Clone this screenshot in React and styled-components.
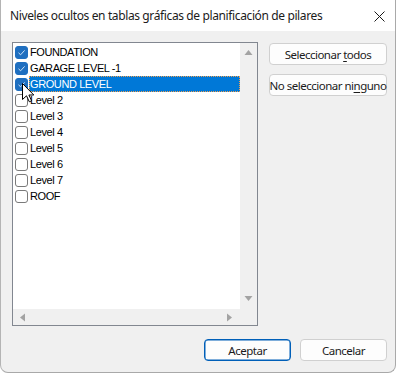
import React from 'react';
import styled, { createGlobalStyle } from 'styled-components';

const GlobalStyle = createGlobalStyle`
	html, body {
		margin: 0;
		padding: 0;
		background: #ffffff;
	}
	* {
		box-sizing: border-box;
	}
`;

const levels = [
	{ name: 'FOUNDATION', checked: true },
	{ name: 'GARAGE LEVEL -1', checked: true },
	{ name: 'GROUND LEVEL', checked: true, selected: true },
	{ name: 'Level 2', checked: false },
	{ name: 'Level 3', checked: false },
	{ name: 'Level 4', checked: false },
	{ name: 'Level 5', checked: false },
	{ name: 'Level 6', checked: false },
	{ name: 'Level 7', checked: false },
	{ name: 'ROOF', checked: false },
];

const Arrow = ({ dir }) => {
	const shapes = {
		up: '0,6 4,1 8,6',
		down: '0,1 4,6 8,1',
		left: '6,0 1,4 6,8',
		right: '1,0 6,4 1,8',
	};
	const vertical = dir === 'up' || dir === 'down';
	return (
		<svg width={vertical ? 9 : 7} height={vertical ? 7 : 9} viewBox={vertical ? '0 0 8 7' : '0 0 7 8'}>
			<polygon points={shapes[dir]} fill='#a3a3a3' />
		</svg>
	);
};

const Checkbox = ({ checked }) => (
	<StyledCheck $checked={checked}>
		{checked && (
			<svg width='9' height='9' viewBox='0 0 9 9'>
				<polyline points='1.5,4.8 3.6,6.8 7.6,2.4' fill='none' stroke='#cfe4f7' strokeWidth='1' />
			</svg>
		)}
	</StyledCheck>
);

const Cursor = () => (
	<StyledCursor width='13' height='20' viewBox='0 0 13 20'>
		<polygon
			points='0.5,0.5 0.5,16.5 4.5,12.8 7.3,18.8 9.6,17.8 6.9,12 11.8,12'
			fill='#ffffff'
			stroke='#000000'
			strokeWidth='1'
			strokeLinejoin='miter'
		/>
	</StyledCursor>
);

const App = () => {
	return (
		<>
			<GlobalStyle />
			<Window>
				<TitleBar>
					<Title>Niveles ocultos en tablas gráficas de planificación de pilares</Title>
					<CloseButton>
						<svg width='11' height='11' viewBox='0 0 11 11'>
							<path d='M0.5 0.5 L10.5 10.5 M10.5 0.5 L0.5 10.5' stroke='#1a1a1a' strokeWidth='1' />
						</svg>
					</CloseButton>
				</TitleBar>
				<Body>
					<Content>
						<ListBox>
							<ListMain>
								<Items>
									{levels.map((level) => (
										<Item key={level.name}>
											<Checkbox checked={level.checked} />
											<Label $selected={level.selected}>{level.name}</Label>
										</Item>
									))}
									<Cursor />
								</Items>
								<VScroll>
									<Arrow dir='up' />
									<Arrow dir='down' />
								</VScroll>
							</ListMain>
							<HScrollRow>
								<HScroll>
									<Arrow dir='left' />
									<Arrow dir='right' />
								</HScroll>
								<Corner />
							</HScrollRow>
						</ListBox>
						<SideButtons>
							<Button $width={118}>
								<span>
									Seleccionar <u>t</u>odos
								</span>
							</Button>
							<Button $width={118}>
								<span>
									No seleccionar ni<u>n</u>guno
								</span>
							</Button>
						</SideButtons>
					</Content>
					<Footer>
						<Button $width={87} $primary>
							<span>Aceptar</span>
						</Button>
						<Button $width={87}>
							<span>Cancelar</span>
						</Button>
					</Footer>
				</Body>
			</Window>
		</>
	);
};

const Window = styled.div`
	width: 396px;
	height: 373px;
	border: 1px solid #a9a9a9;
	border-top: none;
	border-left-color: #b4b4b4;
	border-radius: 0 0 8px 8px;
	background: #f0f0f0;
	display: flex;
	flex-direction: column;
	overflow: hidden;
	font-family: 'Segoe UI', 'Noto Sans', sans-serif;
`;

const TitleBar = styled.div`
	height: 31px;
	flex: 0 0 31px;
	background: #ffffff;
	display: flex;
	align-items: center;
	justify-content: space-between;
	padding-left: 9px;
`;

const Title = styled.span`
	font-size: 12px;
	color: #1b1b1b;
	letter-spacing: -0.38px;
	padding-bottom: 1px;
`;

const CloseButton = styled.div`
	width: 46px;
	height: 31px;
	display: flex;
	align-items: center;
	justify-content: center;
	margin-right: -7px;
	padding-top: 1px;
`;

const Body = styled.div`
	flex: 1;
	display: flex;
	flex-direction: column;
	padding: 11px 8px 0 11px;
`;

const Content = styled.div`
	display: flex;
	gap: 11px;
	align-items: flex-start;
`;

const ListBox = styled.div`
	width: 247px;
	height: 284px;
	border: 1px solid #828790;
	background: #ffffff;
	display: flex;
	flex-direction: column;
`;

const ListMain = styled.div`
	flex: 1;
	display: flex;
	min-height: 0;
`;

const Items = styled.div`
	position: relative;
	flex: 1;
	padding: 1px 0 0 2px;
	font-family: 'Liberation Sans', Arial, sans-serif;
	font-size: 11px;
	color: #000000;
`;

const Item = styled.div`
	height: 16px;
	display: flex;
	align-items: center;
`;

const StyledCheck = styled.span`
	width: 13px;
	height: 13px;
	flex: 0 0 13px;
	border-radius: 3px;
	border: 1px solid ${({ $checked }) => ($checked ? '#1f6fc0' : '#7a7a7a')};
	background: ${({ $checked }) => ($checked ? '#1f6fc0' : '#ffffff')};
	display: flex;
	align-items: center;
	justify-content: center;
	margin-top: 1px;
`;

const Label = styled.span`
	margin-left: 1px;
	height: 16px;
	line-height: 16px;
	padding-left: 1px;
	flex: ${({ $selected }) => ($selected ? '1' : '0 0 auto')};
	background: ${({ $selected }) => ($selected ? '#0078d7' : 'transparent')};
	color: ${({ $selected }) => ($selected ? '#ffffff' : '#000000')};
	outline: ${({ $selected }) => ($selected ? '1px dotted #f0a050' : 'none')};
	outline-offset: -1px;
	letter-spacing: -0.4px;
`;

const StyledCursor = styled.svg`
	position: absolute;
	left: 9px;
	top: 40px;
`;

const VScroll = styled.div`
	width: 17px;
	flex: 0 0 17px;
	background: #f0f0f0;
	display: flex;
	flex-direction: column;
	justify-content: space-between;
	align-items: center;
	padding: 6px 0 7px;
`;

const HScrollRow = styled.div`
	height: 16px;
	flex: 0 0 16px;
	display: flex;
`;

const HScroll = styled.div`
	flex: 1;
	background: #f0f0f0;
	display: flex;
	justify-content: space-between;
	align-items: center;
	padding: 0 7px 0 6px;
`;

const Corner = styled.div`
	width: 17px;
	background: #f0f0f0;
`;

const SideButtons = styled.div`
	display: flex;
	flex-direction: column;
	gap: 9px;
	padding-top: 1px;
`;

const Button = styled.div`
	width: ${({ $width }) => $width}px;
	height: 22px;
	border: 1px solid ${({ $primary }) => ($primary ? '#005fb8' : '#d0d0d0')};
	box-shadow: ${({ $primary }) => ($primary ? 'inset 0 0 0 0.5px #005fb8' : 'none')};
	border-radius: 4px;
	background: #fdfdfd;
	display: flex;
	align-items: center;
	justify-content: center;
	font-size: 11.5px;
	color: #1b1b1b;
	letter-spacing: -0.5px;
	white-space: nowrap;
	u {
		text-decoration-thickness: 1px;
		text-underline-offset: 2px;
	}
`;

const Footer = styled.div`
	display: flex;
	justify-content: flex-end;
	gap: 9px;
	padding-top: 13px;
`;

export default App;
